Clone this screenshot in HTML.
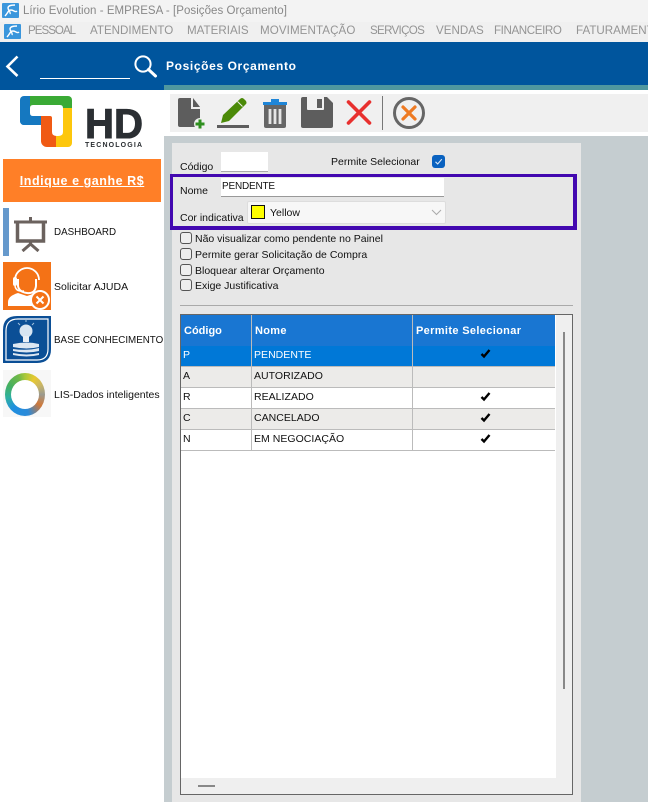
<!DOCTYPE html>
<html><head><meta charset="utf-8"><style>
html,body{margin:0;padding:0}
body{width:648px;height:802px;overflow:hidden;background:#fff;position:relative;font-family:"Liberation Sans",sans-serif;color:#111}
div,span,svg{position:absolute}
.t{white-space:nowrap;font-size:10.5px;line-height:14px}
.m{top:23px;font-size:11.6px;line-height:16px;color:#949494;white-space:nowrap}
.cb{left:180px;width:10px;height:10px;border:1px solid #555;border-radius:3px;background:#eee}
.r{left:181px;width:374px;height:20px;border-bottom:1px solid #bbb}
.g{font-size:10.5px;line-height:14px;white-space:nowrap;letter-spacing:.03px;color:#111}
.v{width:1px;background:#bbb}
</style></head><body>
<!-- title bar -->
<div style="left:0;top:0;width:648px;height:22px;background:#f3f3f3"></div>
<div style="left:0;top:22px;width:648px;height:20px;background:#f0f0f0"></div>
<svg style="left:2px;top:3px" width="17" height="15" viewBox="0 0 17 15"><rect width="17" height="15" rx="1" fill="#3a96dc"/><path d="M3 13C6 10 6 7 9 7s4 3 6 1M13 2C9 2 6 3 6 5s3 4 2 6" stroke="#fff" stroke-width="1.400" fill="none"/></svg>
<div class="t" style="left:23px;top:3px;font-size:11.500px;line-height:16px;color:#888;letter-spacing:.04px">Lírio Evolution - EMPRESA - [Posições Orçamento]</div>
<svg style="left:4px;top:24px" width="17" height="15" viewBox="0 0 17 15"><rect width="17" height="15" rx="1" fill="#3a96dc"/><path d="M3 13C6 10 6 7 9 7s4 3 6 1M13 2C9 2 6 3 6 5s3 4 2 6" stroke="#fff" stroke-width="1.400" fill="none"/></svg>
<div class="m" style="left:28px;letter-spacing:-1px">PESSOAL</div>
<div class="m" style="left:90px">ATENDIMENTO</div>
<div class="m" style="left:187px">MATERIAIS</div>
<div class="m" style="left:260px;letter-spacing:.08px">MOVIMENTAÇÃO</div>
<div class="m" style="left:370px;letter-spacing:-.7px">SERVIÇOS</div>
<div class="m" style="left:436px">VENDAS</div>
<div class="m" style="left:494px;letter-spacing:-.4px">FINANCEIRO</div>
<div class="m" style="left:576px">FATURAMENTO</div>
<!-- blue header -->
<div style="left:0;top:42px;width:648px;height:48px;background:#00559d"></div>
<div style="left:164px;top:85px;width:484px;height:5px;background:#4f979f"></div>
<div style="left:0;top:90px;width:648px;height:712px;background:#fff"></div>
<svg style="left:4px;top:54px" width="16" height="24" viewBox="0 0 16 24"><path d="M13.500 2.500 3.500 12.500 13.500 22" stroke="#fff" stroke-width="2.600" fill="none"/></svg>
<div style="left:40px;top:78px;width:90px;height:1px;background:#fff"></div>
<svg style="left:133px;top:54px" width="25" height="24" viewBox="0 0 25 24"><circle cx="10" cy="10" r="7.600" stroke="#fff" stroke-width="2" fill="none"/><path d="M15.500 15.500 22.500 22" stroke="#fff" stroke-width="3" stroke-linecap="round"/></svg>
<div class="t" style="left:166px;top:59px;color:#fff;font-weight:bold;font-size:12px;line-height:15px;letter-spacing:.62px">Posições Orçamento</div>
<!-- main area -->
<div style="left:164px;top:136px;width:484px;height:666px;background:#c5cdd0"></div>
<div style="left:170px;top:94px;width:478px;height:38px;background:#f0f0f0"></div>
<div style="left:172px;top:143px;width:409px;height:659px;background:#e7e7e7"></div>
<!-- toolbar -->
<svg style="left:170px;top:94px" width="260" height="38" viewBox="0 0 260 38">
<path d="M10 4h11v11h9v18H10a2 2 0 0 1-2-2V6a2 2 0 0 1 2-2z" fill="#5d5d5d"/>
<path d="M23 4l7 9h-7z" fill="#5d5d5d"/>
<circle cx="30" cy="30" r="6" fill="#f0f0f0"/>
<path d="M30 25.500v9M25.500 30h9" stroke="#2f8f1f" stroke-width="3"/>
<path d="M51 29l2-8L70 5q2-2 4 0l2 2q1 2 0 3L59 27z" fill="#4b8a08"/>
<path d="M67.500 7.500l5 5" stroke="#f0f0f0" stroke-width="1"/>
<rect x="47" y="31" width="32" height="3" fill="#5d5d5d"/>
<rect x="93" y="8" width="24" height="3" fill="#1f86d8"/><rect x="101" y="5" width="8" height="3" fill="#1f86d8"/>
<path d="M94 11h22v21a2 2 0 0 1-2 2H96a2 2 0 0 1-2-2z" fill="#666"/>
<path d="M100 15v15M105 15v15M110 15v15" stroke="#e6e6e6" stroke-width="2.800"/>
<path d="M133 3h24l6 6v23a2 2 0 0 1-2 2h-28a2 2 0 0 1-2-2V5a2 2 0 0 1 2-2z" fill="#5d5d5d"/>
<path d="M137 3h17v12a1 1 0 0 1-1 1h-15a1 1 0 0 1-1-1z" fill="#f0f0f0"/><rect x="147" y="5" width="5" height="9" fill="#5d5d5d"/>
<path d="M178.500 8l21 21M199.500 8l-21 21" stroke="#e8302e" stroke-width="3.600" stroke-linecap="round"/>
<rect x="212" y="2" width="1" height="34" fill="#777"/>
<circle cx="239" cy="19" r="14.500" stroke="#666" stroke-width="3" fill="none"/>
<path d="M233 13l12 12M245 13l-12 12" stroke="#ee7a22" stroke-width="3.200" stroke-linecap="round"/>
</svg>
<!-- form -->
<div class="t" style="left:180px;top:160px">Código</div>
<div style="left:221px;top:152px;width:47px;height:19px;background:#fff;border-bottom:1px solid #aaa"></div>
<div class="t" style="left:331px;top:155px">Permite Selecionar</div>
<div style="left:432px;top:155px;width:13px;height:13px;background:#0a62c0;border-radius:3px"></div>
<svg style="left:432px;top:155px" width="13" height="13"><path d="M3.500 6.800 5.700 9 9.800 4.200" stroke="#dfeaf7" stroke-width="1.100" fill="none"/></svg>
<div style="left:170px;top:174px;width:400px;height:49px;border:3px solid #4208b0;border-width:3px 4px 4px 3px"></div>
<div class="t" style="left:180px;top:184px">Nome</div>
<div style="left:221px;top:178px;width:223px;height:18px;background:#fff;border-bottom:1px solid #999"></div>
<div class="t" style="left:222px;top:180px;font-size:10px;letter-spacing:-.2px">PENDENTE</div>
<div class="t" style="left:180px;top:211px">Cor indicativa</div>
<div style="left:247px;top:201px;width:197px;height:21px;background:#f7f7f7;border:1px solid #ddd;border-radius:2px"></div>
<div style="left:251px;top:205px;width:12px;height:12px;background:#ff0;border:1px solid #111"></div>
<div class="t" style="left:270px;top:206px">Yellow</div>
<svg style="left:431px;top:209px" width="11" height="7"><path d="M1 1l4.500 4.500L10 1" stroke="#aaa" fill="none"/></svg>
<div class="cb" style="top:232px"></div><div class="t" style="left:195px;top:232px">Não visualizar como pendente no Painel</div>
<div class="cb" style="top:248px"></div><div class="t" style="left:195px;top:248px">Permite gerar Solicitação de Compra</div>
<div class="cb" style="top:264px"></div><div class="t" style="left:195px;top:264px">Bloquear alterar Orçamento</div>
<div class="cb" style="top:279px"></div><div class="t" style="left:195px;top:279px">Exige Justificativa</div>
<div style="left:180px;top:305px;width:393px;height:1px;background:#aaa"></div>
<!-- grid -->
<div style="left:180px;top:314px;width:391px;height:479px;border:1px solid #666;background:#efefef"></div>
<div style="left:181px;top:315px;width:375px;height:463px;background:#fff"></div>
<div style="left:181px;top:315px;width:374px;height:31px;background:#1976d2"></div>
<div style="left:181px;top:346px;width:374px;height:20px;background:#0078d7"></div>
<div style="left:181px;top:366px;width:374px;height:1px;background:#bbb"></div>
<div class="r" style="top:367px;background:#ecebe9"></div>
<div class="r" style="top:388px;background:#fff"></div>
<div class="r" style="top:409px;background:#ecebe9"></div>
<div class="r" style="top:430px;background:#fff"></div>
<div class="v" style="left:251px;top:315px;height:135px"></div>
<div class="v" style="left:412px;top:315px;height:135px"></div>
<div class="t" style="left:184px;top:324px;color:#fff;font-weight:bold;font-size:11px">Código</div>
<div class="t" style="left:255px;top:324px;color:#fff;font-weight:bold;font-size:11px;letter-spacing:.3px">Nome</div>
<div class="t" style="left:416px;top:324px;color:#fff;font-weight:bold;font-size:11px;letter-spacing:.35px">Permite Selecionar</div>
<div class="g" style="left:183px;top:348px;color:#fff">P</div><div class="g" style="left:254px;top:348px;color:#fff">PENDENTE</div>
<div class="g" style="left:183px;top:369px">A</div><div class="g" style="left:254px;top:369px">AUTORIZADO</div>
<div class="g" style="left:183px;top:390px">R</div><div class="g" style="left:254px;top:390px">REALIZADO</div>
<div class="g" style="left:183px;top:411px">C</div><div class="g" style="left:254px;top:411px">CANCELADO</div>
<div class="g" style="left:183px;top:432px">N</div><div class="g" style="left:254px;top:432px">EM NEGOCIAÇÃO</div>
<svg style="left:480px;top:348px" width="11" height="11"><path d="M1.500 6 4 8.500 9.500 2" stroke="#000" stroke-width="2.400" fill="none"/></svg>
<svg style="left:480px;top:391px" width="11" height="11"><path d="M1.500 6 4 8.500 9.500 2" stroke="#000" stroke-width="2.400" fill="none"/></svg>
<svg style="left:480px;top:412px" width="11" height="11"><path d="M1.500 6 4 8.500 9.500 2" stroke="#000" stroke-width="2.400" fill="none"/></svg>
<svg style="left:480px;top:433px" width="11" height="11"><path d="M1.500 6 4 8.500 9.500 2" stroke="#000" stroke-width="2.400" fill="none"/></svg>
<div style="left:563px;top:332px;width:2px;height:357px;background:#888"></div>
<div style="left:198px;top:785px;width:17px;height:2px;background:#888"></div>
<!-- sidebar -->
<div style="left:164px;top:136px;width:1px;height:666px;background:#c5cdd0"></div>
<svg style="left:18px;top:94px" width="128" height="56" viewBox="0 0 128 56">
<path d="M6 2h16v29H6a4 4 0 0 1-4-4V6a4 4 0 0 1 4-4z" fill="#1578c0"/>
<path d="M2 20v7a4 4 0 0 0 4 4h19V20z" fill="#1578c0"/>
<path d="M12 2h38a4 4 0 0 1 4 4v14H12z" fill="#3aaa35"/>
<path d="M37 14h17v35a4 4 0 0 1-4 4H37z" fill="#fdc70c"/>
<path d="M23 22h15v31h-9a6 6 0 0 1-6-6z" fill="#f05a14"/>
<path d="M15 11h27q3 0 3 3v24q0 4-5 4h-1q-5 0-5-4V24q0-2-2-2H15q-3 0-3-3v-5q0-3 3-3z" fill="#fff"/>
<text x="67" y="44" font-family="Liberation Sans" font-weight="bold" font-size="42" fill="#2b2f33" stroke="#2b2f33" stroke-width="1" textLength="58" lengthAdjust="spacingAndGlyphs">HD</text>
<text x="67" y="53" font-family="Liberation Sans" font-weight="bold" font-size="7" fill="#2b2f33" textLength="57">TECNOLOGIA</text>
</svg>
<div style="left:3px;top:159px;width:158px;height:43px;background:#ff7f27"></div>
<div class="t" style="left:3px;top:173px;width:158px;text-align:center;color:#fff;font-weight:bold;font-size:12.500px;letter-spacing:.55px;text-decoration:underline;line-height:16px">Indique e ganhe R$</div>
<div style="left:3px;top:208px;width:6px;height:48px;background:#6699cc"></div>
<svg style="left:13px;top:216px" width="35" height="36" viewBox="0 0 35 36"><path d="M1 6h33M17.500 1v5" stroke="#6b625e" stroke-width="3"/><path d="M4.500 6v19h26V6" stroke="#6b625e" stroke-width="3.500" fill="none"/><path d="M17.500 25v4M17.500 28l-8 7M17.500 28l8 7" stroke="#6b625e" stroke-width="3" fill="none"/></svg>
<div class="t" style="left:54px;top:226px;font-size:9.800px">DASHBOARD</div>
<svg style="left:3px;top:262px" width="48" height="48" viewBox="0 0 48 48"><rect width="48" height="48" fill="#f47216"/><path d="M12 18a12 12 0 0 1 24 0" stroke="#fff" stroke-width="1.800" fill="none"/><path d="M15 17v7q1 6 9 7t9-7v-7" stroke="#fff" stroke-width="2" fill="none"/><rect x="10" y="15" width="4" height="9" rx="2" fill="#fff"/><path d="M12 24q1 6 9 5" stroke="#fff" stroke-width="1.500" fill="none"/><path d="M5 44v-4q0-6 10-9l9 3 9-3q3 1 5 3l-5 10z" fill="#fff"/><circle cx="37" cy="38" r="9" fill="#f47216" stroke="#fff" stroke-width="2"/><path d="M33.500 34.500l7 7M40.500 34.500l-7 7" stroke="#fff" stroke-width="2"/></svg>
<div class="t" style="left:54px;top:280px">Solicitar AJUDA</div>
<svg style="left:3px;top:316px" width="48" height="47" viewBox="0 0 48 47"><path d="M14 0h34v33q0 14-14 14H0V14Q0 0 14 0z" fill="#0b4f96"/><path d="M15 3h30v30q0 11-11 11H3V15Q3 3 15 3z" fill="none" stroke="#fff" stroke-width="1.200"/><circle cx="23" cy="15" r="6.500" fill="#d7e5f2"/><rect x="20" y="20" width="6" height="6" fill="#e8eef5"/><path d="M23 4v2M15 7l2 2M31 7l-2 2" stroke="#9fc0de" stroke-width="1"/><path d="M10 28q14-3 26 0v3q-12 3-26 0zM10 33q14 2 26-1v3q-12 3-26 0zM10 37q14 3 26 0v2q-12 3-26 0z" fill="#dce7f2"/></svg>
<div class="t" style="left:54px;top:334px;font-size:9.800px">BASE CONHECIMENTO</div>
<div style="left:3px;top:370px;width:48px;height:47px;background:#f7f7f7"></div>
<div style="left:5px;top:373px;width:40px;height:43px;border-radius:50%;background:conic-gradient(#a8c83a 0deg,#e8c830 30deg,#c9b566 60deg,#9a9a90 90deg,#d07838 125deg,#2c8ad8 170deg,#1f8fe0 220deg,#2fb0a0 260deg,#45b060 300deg,#70b848 340deg,#a8c83a 360deg)"></div>
<div style="left:11px;top:380px;width:28px;height:29px;border-radius:50%;background:#fff"></div>
<div class="t" style="left:54px;top:388px">LIS-Dados inteligentes</div>
</body></html>
